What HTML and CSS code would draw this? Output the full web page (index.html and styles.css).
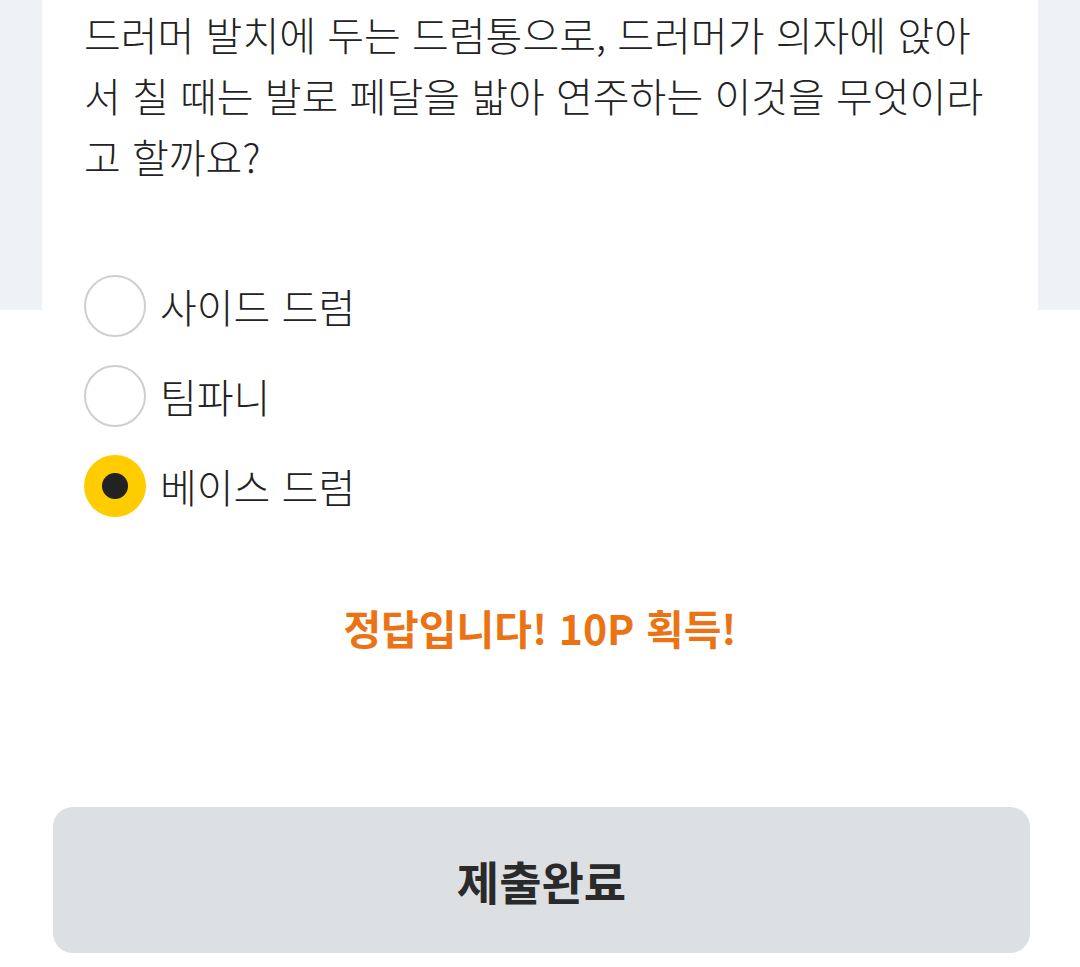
FILE: index.html
```html
<!DOCTYPE html>
<html lang="ko">
<head>
  <meta charset="UTF-8">
  <meta name="viewport" content="width=device-width, initial-scale=1.0">
  <title>오늘의 퀴즈</title>
  <link rel="stylesheet" href="styles.css">
</head>
<body>
  <main class="quiz">
    <section class="card">
      <p class="question">드러머 발치에 두는 드럼통으로, 드러머가 의자에 앉아 서 칠 때는 발로 페달을 밟아 연주하는 이것을 무엇이라고 할까요?</p>

      <div class="options">
        <label class="option">
          <input type="radio" name="answer" value="1">
          <span>사이드 드럼</span>
        </label>
        <label class="option">
          <input type="radio" name="answer" value="2">
          <span>팀파니</span>
        </label>
        <label class="option">
          <input type="radio" name="answer" value="3" checked>
          <span>베이스 드럼</span>
        </label>
      </div>

      <p class="result">정답입니다! 10P 획득!</p>
    </section>

    <div class="actions">
      <button class="submit-btn">제출완료</button>
    </div>
  </main>
</body>
</html>
```

FILE: styles.css
```css
:root {
  --side-color: #eef1f6;
  --text-color: #222222;
  --accent-color: #ffcc00;
  --result-color: #ec7314;
  --button-color: #dde0e3;
}

* {
  margin: 0;
  padding: 0;
  box-sizing: border-box;
}

body {
  font-family: 'Noto Sans CJK KR', 'Noto Sans', sans-serif;
  background-color: white;
  color: var(--text-color);
}

.quiz {
  background: linear-gradient(var(--side-color), var(--side-color)) no-repeat top / 100% 310px;
  min-height: 967px;
}

.card {
  margin: 0 42px;
  padding: 4px 42px 0;
  background-color: white;
}

.question {
  font-size: 40px;
  line-height: 61px;
  font-weight: 300;
}

.options {
  display: flex;
  flex-direction: column;
  gap: 28px;
  margin-top: 88px;
}

.option {
  display: flex;
  align-items: center;
  gap: 14px;
  font-size: 40px;
  font-weight: 300;
  cursor: pointer;
}

.option input {
  appearance: none;
  width: 62px;
  height: 62px;
  border: 2px solid #cfcfcf;
  border-radius: 50%;
  background-color: white;
  flex-shrink: 0;
}

.option input:checked {
  border: none;
  background: radial-gradient(circle, var(--text-color) 12.5px, var(--accent-color) 13.5px);
}

.result {
  margin-top: 85px;
  text-align: center;
  font-size: 41px;
  font-weight: 700;
  line-height: 50px;
  color: var(--result-color);
}

.actions {
  padding: 155px 50px 0 53px;
}

.submit-btn {
  width: 100%;
  height: 146px;
  border: none;
  border-radius: 20px;
  background-color: var(--button-color);
  font-family: inherit;
  font-size: 46px;
  font-weight: 700;
  color: #2a2a2a;
  cursor: pointer;
}
```
